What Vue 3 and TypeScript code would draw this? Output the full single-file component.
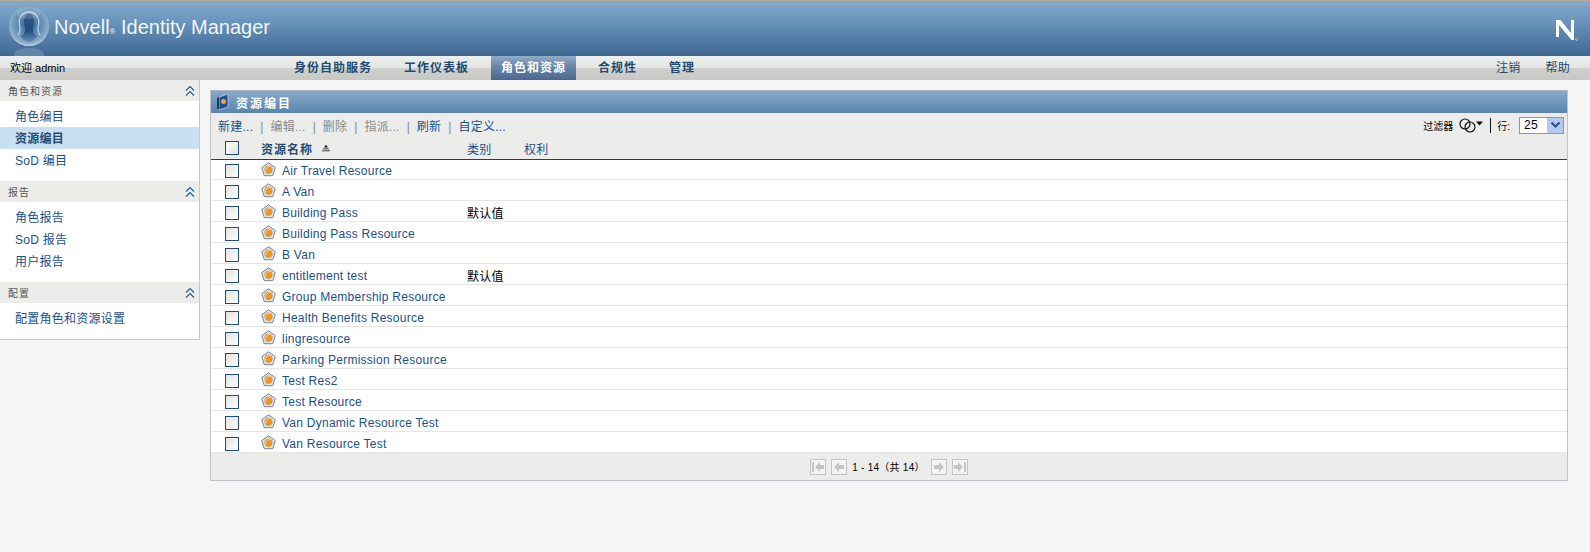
<template>
  <div class="page">
    <header class="banner">
      <svg class="globe" width="46" height="56" viewBox="0 0 46 56">
        <defs>
          <radialGradient id="orb" cx="50%" cy="45%" r="55%">
            <stop offset="0" stop-color="#3a6494" />
            <stop offset="0.65" stop-color="#6a94ba" />
            <stop offset="0.9" stop-color="#8fb0cc" />
            <stop offset="1" stop-color="#c8d8e6" />
          </radialGradient>
          <linearGradient id="figure" x1="0" y1="0" x2="0" y2="1">
            <stop offset="0" stop-color="#2a5587" />
            <stop offset="0.6" stop-color="#1c4578" />
            <stop offset="1" stop-color="#5f8db5" />
          </linearGradient>
        </defs>
        <ellipse cx="23" cy="54" rx="15" ry="7" fill="#7fa0c0" opacity="0.5" />
        <circle cx="23" cy="25" r="20" fill="url(#orb)" />
        <path d="M23 13c-3.500 0-5.500 4-5 9 .3 3 1.500 5 1 8-.4 2.500-2 4-4 5 2 4 5 6 8 6s6-2 8-6c-2-1-3.600-2.500-4-5-.5-3 .7-5 1-8 .5-5-1.500-9-5-9z" fill="url(#figure)" opacity="0.85" />
        <path d="M12 34c3-3 2.500-6 1.500-10-1.500-7 3-13 9.500-13s11 6 9.500 13c-1 4-1.500 7 1.500 10" fill="none" stroke="#e6eff6" stroke-width="1.300" opacity="0.7" />
        <ellipse cx="23" cy="12" rx="12" ry="6" fill="#fff" opacity="0.15" />
      </svg>
      <h1 class="product">Novell<span class="reg">®</span> Identity Manager</h1>
      <svg class="n-logo" width="24" height="24" viewBox="0 0 24 24">
        <path d="M2 2h4.500L17 15V2h3v20h-2.500L5 7v12H2z" fill="#fff" />
        <circle cx="22.500" cy="21.500" r="1" fill="none" stroke="#dfe9f1" stroke-width="0.600" />
      </svg>
    </header>

    <nav class="nav">
      <span class="welcome">欢迎 admin</span>
      <ul class="tabs">
        <li v-for="tab in tabs" :key="tab" class="tab" :class="{ active: tab === '角色和资源' }">{{ tab }}</li>
      </ul>
      <div class="nav-links">
        <a>注销</a>
        <a>帮助</a>
      </div>
    </nav>

    <div class="body">
      <aside class="sidebar">
        <section v-for="sec in sections" :key="sec.title" class="side-sec">
          <div class="side-head">
            <span>{{ sec.title }}</span>
            <svg width="12" height="12" viewBox="0 0 12 12" fill="none" stroke="#2b5a85" stroke-width="1.200">
              <path d="M2 5.500 6 1.500l4 4M2 10.500l4-4 4 4" />
            </svg>
          </div>
          <ul class="side-list">
            <li v-for="item in sec.items" :key="item" class="side-item" :class="{ current: item === '资源编目' }">{{ item }}</li>
          </ul>
        </section>
      </aside>

      <main class="panel">
        <div class="panel-title">
          <svg width="14" height="18" viewBox="0 0 14 18">
            <path d="M3 4 12 1v13l-9 3z" fill="#24508f" stroke="#bcd0e4" stroke-width="0.800" />
            <path d="M1 5 3 4v13l-2-2z" fill="#16386c" />
            <circle cx="7.500" cy="8.500" r="2.500" fill="#e8a33c" />
          </svg>
          <span>资源编目</span>
        </div>

        <div class="toolbar">
          <div class="actions">
            <template v-for="(act, i) in actions" :key="act.label">
              <span v-if="i > 0" class="sep">|</span>
              <a :class="{ disabled: act.disabled }">{{ act.label }}</a>
            </template>
          </div>
          <div class="filter">
            <span class="filter-label">过滤器</span>
            <svg width="25" height="15" viewBox="0 0 25 15" fill="none" stroke="#111" stroke-width="1.200">
              <circle cx="6" cy="6" r="5" />
              <circle cx="11" cy="9" r="5" />
              <path d="M17 3.500h7l-3.500 4z" fill="#111" stroke="none" />
            </svg>
            <span class="filter-bar"></span>
            <span class="filter-label">行:</span>
            <span class="rows-select">
              <span>25</span>
              <span class="rows-btn">
                <svg width="11" height="8" viewBox="0 0 11 8" fill="none" stroke="#2e4f80" stroke-width="2.200">
                  <path d="M1.500 1.500 5.500 5.500l4-4" />
                </svg>
              </span>
            </span>
          </div>
        </div>

        <div class="table-head">
          <span class="col-check"><span class="box head-box"></span></span>
          <span class="col-name head-name">
            资源名称
            <svg width="8" height="8" viewBox="0 0 10 8">
              <path d="M5 0 7.500 3.500h-5z" fill="#111" />
              <path d="M1.500 5h7M0 7.500h10" stroke="#111" stroke-width="1" />
            </svg>
          </span>
          <a class="col-type">类别</a>
          <a class="col-right">权利</a>
        </div>

        <div v-for="row in rows" :key="row.name" class="row">
          <span class="col-check"><span class="box"></span></span>
          <span class="col-name">
            <svg class="res-icon" width="15" height="15" viewBox="0 0 15 15">
              <path d="M7.500.8 14.300 5.700 11.700 13.700H3.300L.7 5.700z" fill="#dfe6ee" stroke="#6a84a3" stroke-width="1" />
              <circle cx="7.500" cy="7.800" r="4.200" fill="#e8972f" />
              <path d="M4.800 9.500a3.800 3.800 0 0 1 4.800-4.800" stroke="#f7d49a" fill="none" stroke-width="1" />
            </svg>
            <a>{{ row.name }}</a>
          </span>
          <span class="col-type cell-type">{{ row.type }}</span>
        </div>

        <div class="pager">
          <span class="pg-btn">
            <svg width="14" height="12" viewBox="0 0 14 12" fill="#c4c4c4"><path d="M1 1h2v10H1zM4 6l5-5v3h4v4H9v3z" /></svg>
          </span>
          <span class="pg-btn">
            <svg width="14" height="12" viewBox="0 0 14 12" fill="#c4c4c4"><path d="M2 6l5-5v3h5v4H7v3z" /></svg>
          </span>
          <span class="pg-text">1 - 14（共 14）</span>
          <span class="pg-btn">
            <svg width="14" height="12" viewBox="0 0 14 12" fill="#c4c4c4"><path d="M12 6 7 1v3H2v4h5v3z" /></svg>
          </span>
          <span class="pg-btn">
            <svg width="14" height="12" viewBox="0 0 14 12" fill="#c4c4c4"><path d="M13 1h-2v10h2zM10 6 5 1v3H1v4h4v3z" /></svg>
          </span>
        </div>
      </main>
    </div>
  </div>
</template>

<script setup lang="ts">
const tabs = ['身份自助服务', '工作仪表板', '角色和资源', '合规性', '管理'];

const sections = [
  { title: '角色和资源', items: ['角色编目', '资源编目', 'SoD 编目'] },
  { title: '报告', items: ['角色报告', 'SoD 报告', '用户报告'] },
  { title: '配置', items: ['配置角色和资源设置'] },
];

const actions = [
  { label: '新建...' },
  { label: '编辑...', disabled: true },
  { label: '删除', disabled: true },
  { label: '指派...', disabled: true },
  { label: '刷新' },
  { label: '自定义...' },
];

const rows = [
  { name: 'Air Travel Resource', type: '' },
  { name: 'A Van', type: '' },
  { name: 'Building Pass', type: '默认值' },
  { name: 'Building Pass Resource', type: '' },
  { name: 'B Van', type: '' },
  { name: 'entitlement test', type: '默认值' },
  { name: 'Group Membership Resource', type: '' },
  { name: 'Health Benefits Resource', type: '' },
  { name: 'lingresource', type: '' },
  { name: 'Parking Permission Resource', type: '' },
  { name: 'Test Res2', type: '' },
  { name: 'Test Resource', type: '' },
  { name: 'Van Dynamic Resource Test', type: '' },
  { name: 'Van Resource Test', type: '' },
];
</script>

<style>
html,
body {
  background: #f5f5f5;
}
</style>

<style scoped>
.page {
  height: 552px;
  overflow: hidden;
  background: #f5f5f5;
  font-family: "Liberation Sans", "Noto Sans CJK SC", sans-serif;
  font-size: 12px;
  letter-spacing: 0.25px;
  color: #000;
}

ul {
  list-style: none;
  margin: 0;
  padding: 0;
}

.banner {
  height: 56px;
  box-sizing: border-box;
  border-top: 1px solid #b5ab98;
  background: linear-gradient(#86a9c9, #6b96bd 35%, #3f6892);
  display: flex;
  align-items: center;
  padding: 0 12px 0 6px;
  overflow: hidden;
}

.globe {
  flex-shrink: 0;
  margin-right: 2px;
}

.product {
  margin: 0 0 2px;
  color: #f2f6fa;
  font-size: 20px;
  font-weight: 400;
  letter-spacing: 0;
}

.reg {
  font-size: 8px;
}

.n-logo {
  margin-left: auto;
  margin-top: 2px;
}

.nav {
  height: 24px;
  background: linear-gradient(#eef0ee, #e4e6e3 48%, #cfd0cc 50%, #c8c9c5);
  display: flex;
  align-items: stretch;
  line-height: 24px;
}

.welcome {
  width: 284px;
  box-sizing: border-box;
  padding-left: 10px;
  flex-shrink: 0;
  font-size: 11px;
  letter-spacing: 0;
}

.tabs {
  display: flex;
}

.tab {
  padding: 0 10px;
  margin-right: 12px;
  font-weight: 700;
  color: #234b70;
  letter-spacing: 1px;
}

.tab.active {
  margin-right: 12px;
  color: #fff;
  background: linear-gradient(#93acc7, #6b89ad 40%, #4a688f);
}

.nav-links {
  margin-left: auto;
  display: flex;
  gap: 25px;
  padding-right: 20px;
  color: #234b70;
}

.body {
  display: flex;
  align-items: flex-start;
}

.sidebar {
  width: 199px;
  height: 259px;
  flex-shrink: 0;
  box-sizing: content-box;
  background: #fff;
  border-right: 1px solid #c4c8cc;
  border-bottom: 1px solid #c4c8cc;
}

.side-head {
  height: 21px;
  padding: 0 3px 0 8px;
  background: #ecedeb;
  display: flex;
  align-items: center;
  justify-content: space-between;
  color: #555;
  font-size: 10px;
  letter-spacing: 1px;
}

.side-list {
  padding: 4px 0 10px;
}

.side-item {
  height: 22px;
  line-height: 25px;
  padding-left: 15px;
  color: #19508c;
}

.side-item.current {
  background: #c9dff2;
  color: #234b70;
  font-weight: 700;
}

.panel {
  width: 1358px;
  height: 391px;
  margin: 10px 0 0 10px;
  flex-shrink: 0;
  box-sizing: border-box;
  border: 1px solid #c0c4c8;
  border-top-color: #aeb8c2;
  background: #fff;
}

.panel-title {
  height: 22px;
  background: linear-gradient(#86a9c9, #5c84ab);
  display: flex;
  align-items: center;
  gap: 6px;
  padding-left: 5px;
  color: #fff;
  font-weight: 700;
  letter-spacing: 2px;
}

.toolbar {
  height: 24px;
  background: #ecedeb;
  display: flex;
  align-items: center;
  justify-content: space-between;
  padding: 0 3px 0 7px;
}

.actions a {
  color: #19508c;
}

.actions a.disabled {
  color: #8a8a8a;
}

.sep {
  color: #8a8a8a;
  margin: 0 7px;
  letter-spacing: 0;
}

.filter {
  display: flex;
  align-items: center;
  gap: 6px;
}

.filter-label {
  font-size: 10px;
  letter-spacing: 0;
}

.filter-bar {
  width: 1px;
  height: 15px;
  background: #111;
}

.rows-select {
  width: 45px;
  height: 17px;
  margin-left: 3px;
  box-sizing: border-box;
  border: 1px solid #7f9db9;
  background: #fff;
  display: flex;
  align-items: center;
  justify-content: space-between;
  padding-left: 4px;
  line-height: 15px;
}

.rows-btn {
  width: 16px;
  height: 15px;
  background: #b5c9f0;
  display: flex;
  align-items: center;
  justify-content: center;
}

.table-head {
  height: 23px;
  box-sizing: border-box;
  background: #ecedeb;
  border-bottom: 1px solid #1e3f66;
  display: flex;
  align-items: center;
}

.table-head a {
  color: #19508c;
}

.col-check {
  width: 50px;
  flex-shrink: 0;
  display: flex;
  padding-left: 14px;
  box-sizing: border-box;
}

.col-name {
  width: 206px;
  flex-shrink: 0;
  display: flex;
  align-items: center;
  gap: 6px;
}

.col-name a {
  color: #19508c;
}

.head-name {
  gap: 9px;
  font-weight: 700;
  color: #234b70;
  letter-spacing: 1px;
}

.col-type {
  width: 57px;
  flex-shrink: 0;
}

.col-right {
  width: 40px;
}

.box {
  width: 12px;
  height: 12px;
  box-sizing: content-box;
  border: 1px solid #1c4f80;
  background: linear-gradient(135deg, #e2e3df, #fff);
  display: block;
}

.head-box {
  background: linear-gradient(135deg, #fff, #e2e3df);
}

.row {
  height: 21px;
  padding-top: 3px;
  box-sizing: border-box;
  border-bottom: 1px solid #e6e7e5;
  display: flex;
  align-items: center;
  background: #fff;
}

.table-head + .row {
  height: 20px;
  padding-top: 2px;
}

.res-icon {
  flex-shrink: 0;
  margin-top: -3px;
}

.cell-type {
  color: #000;
}

.pager {
  height: 27px;
  box-sizing: border-box;
  background: #ecedeb;
  display: flex;
  align-items: center;
  justify-content: center;
  gap: 5px;
}

.pg-btn {
  width: 16px;
  height: 16px;
  box-sizing: border-box;
  border: 1px solid #c4c4c4;
  background: #f4f4f2;
  display: flex;
  align-items: center;
  justify-content: center;
}

.pg-text {
  margin-right: 1px;
  font-size: 10px;
}
</style>
